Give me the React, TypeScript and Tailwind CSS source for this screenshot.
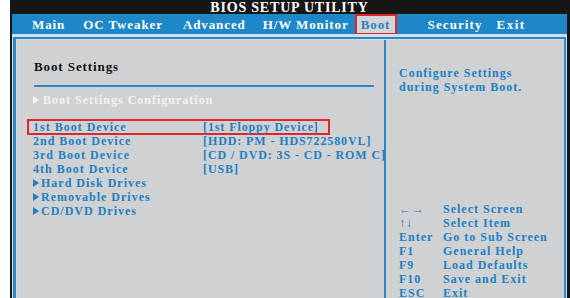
import React from "react";

const serif = { fontFamily: '"Liberation Serif", "DejaVu Serif", serif' };

const rows: [string, string][] = [
  ["1st Boot Device", "[1st  Floppy Device]"],
  ["2nd Boot Device", "[HDD: PM - HDS722580VL]"],
  ["3rd Boot Device", "[CD / DVD: 3S - CD - ROM C]"],
  ["4th Boot Device", "[USB]"],
];

const subs = ["Hard Disk Drives", "Removable Drives", "CD/DVD Drives"];

const keys: [string, string][] = [
  ["←→", "Select Screen"],
  ["↑↓", "Select Item"],
  ["Enter", "Go to Sub Screen"],
  ["F1", "General Help"],
  ["F9", "Load Defaults"],
  ["F10", "Save and Exit"],
  ["ESC", "Exit"],
];

function Tri({ color }: { color: string }) {
  return (
    <svg width="6" height="8" viewBox="0 0 6 8" className="mr-[2px] shrink-0">
      <path d="M0 0 L6 4 L0 8 Z" fill={color} />
    </svg>
  );
}

export default function App() {
  return (
    <div className="w-[570px] h-[298px] bg-white flex overflow-hidden" style={serif}>
      <div className="w-[10px] shrink-0 bg-white" />
      <div className="flex-1 bg-[#161616] flex flex-col pl-[2px] pr-[3px]">
        <div className="h-[14px] flex items-center justify-center text-white font-bold text-[14px] tracking-[0.8px] leading-none pt-[1px]">
          BIOS SETUP UTILITY
        </div>
        <div className="h-[20px] bg-[#1d87c8] flex items-center text-white font-bold text-[13px] tracking-[0.9px] leading-none">
          <span className="ml-[20px]">Main</span>
          <span className="ml-[18px]">OC Tweaker</span>
          <span className="ml-[20px]">Advanced</span>
          <span className="ml-[17px]">H/W Monitor</span>
          <span className="ml-[6px] w-[42px] h-[21px] mt-[1px] border-2 border-[#e0262a] bg-[#d2d5d8] text-[#2b82c0] flex items-center justify-center">Boot</span>
          <span className="ml-[31px] tracking-[1.1px]">Security</span>
          <span className="ml-[14px] tracking-[1.5px]">Exit</span>
        </div>
        <div className="flex-1 bg-[#cfe0ec] pt-[3px] pl-[1px] pr-[1px] flex">
          <div className="flex-1 border-l-[3px] border-t-2 border-r-2 border-[#2e86c6] flex bg-[#cfe0ec] pl-[1px] pt-[1px]">
            <div className="w-[369px] bg-[#d0d1d3] border-r-2 border-[#2e86c6] flex flex-col pl-[15px] pt-[19px]">
              <div className="text-[#111] font-bold text-[13px] tracking-[0.9px] leading-[16px] pl-[2px]">Boot Settings</div>
              <div className="h-[2px] bg-[#2e86c6] mt-[10px] mr-[10px] ml-[2px]" />
              <div className="flex items-center mt-[6px] text-[#f2f2f2] font-bold text-[12px] tracking-[1px] leading-[14px] pl-[1px]">
                <Tri color="#f2f2f2" />
                <span className="ml-[2px]">Boot Settings Configuration</span>
              </div>
              <div className="mt-[13px] flex flex-col text-[#2180c2] font-bold text-[12px] tracking-[1px] leading-[14px]">
                {rows.map(([a, b], i) => (
                  <div key={a} className="flex h-[14px] items-center">
                    <div className={i === 0 ? "flex w-[303px] -ml-[5px] pl-[4px] border-2 border-[#e0262a] h-[16px] items-center -my-[1px]" : "flex ml-[1px]"}>
                      <span className="w-[170px] shrink-0">{a}</span>
                      <span className="whitespace-nowrap tracking-[0.9px]">{b}</span>
                    </div>
                  </div>
                ))}
                {subs.map((s) => (
                  <div key={s} className="flex h-[14px] items-center ml-[1px]">
                    <Tri color="#2180c2" />
                    <span>{s}</span>
                  </div>
                ))}
              </div>
            </div>
            <div className="flex-1 bg-[#d0d1d3] flex flex-col pl-[13px] pt-[26px] text-[#2180c2] font-bold text-[12px] tracking-[1px] leading-[14px]">
              <div>Configure Settings</div>
              <div>during System Boot.</div>
              <div className="mt-[108px] flex flex-col">
                {keys.map(([k, d]) => (
                  <div key={k} className="flex h-[14px] items-center">
                    <span className="w-[44px] shrink-0">{k}</span>
                    <span className="whitespace-nowrap">{d}</span>
                  </div>
                ))}
              </div>
            </div>
          </div>
        </div>
      </div>
    </div>
  );
}
